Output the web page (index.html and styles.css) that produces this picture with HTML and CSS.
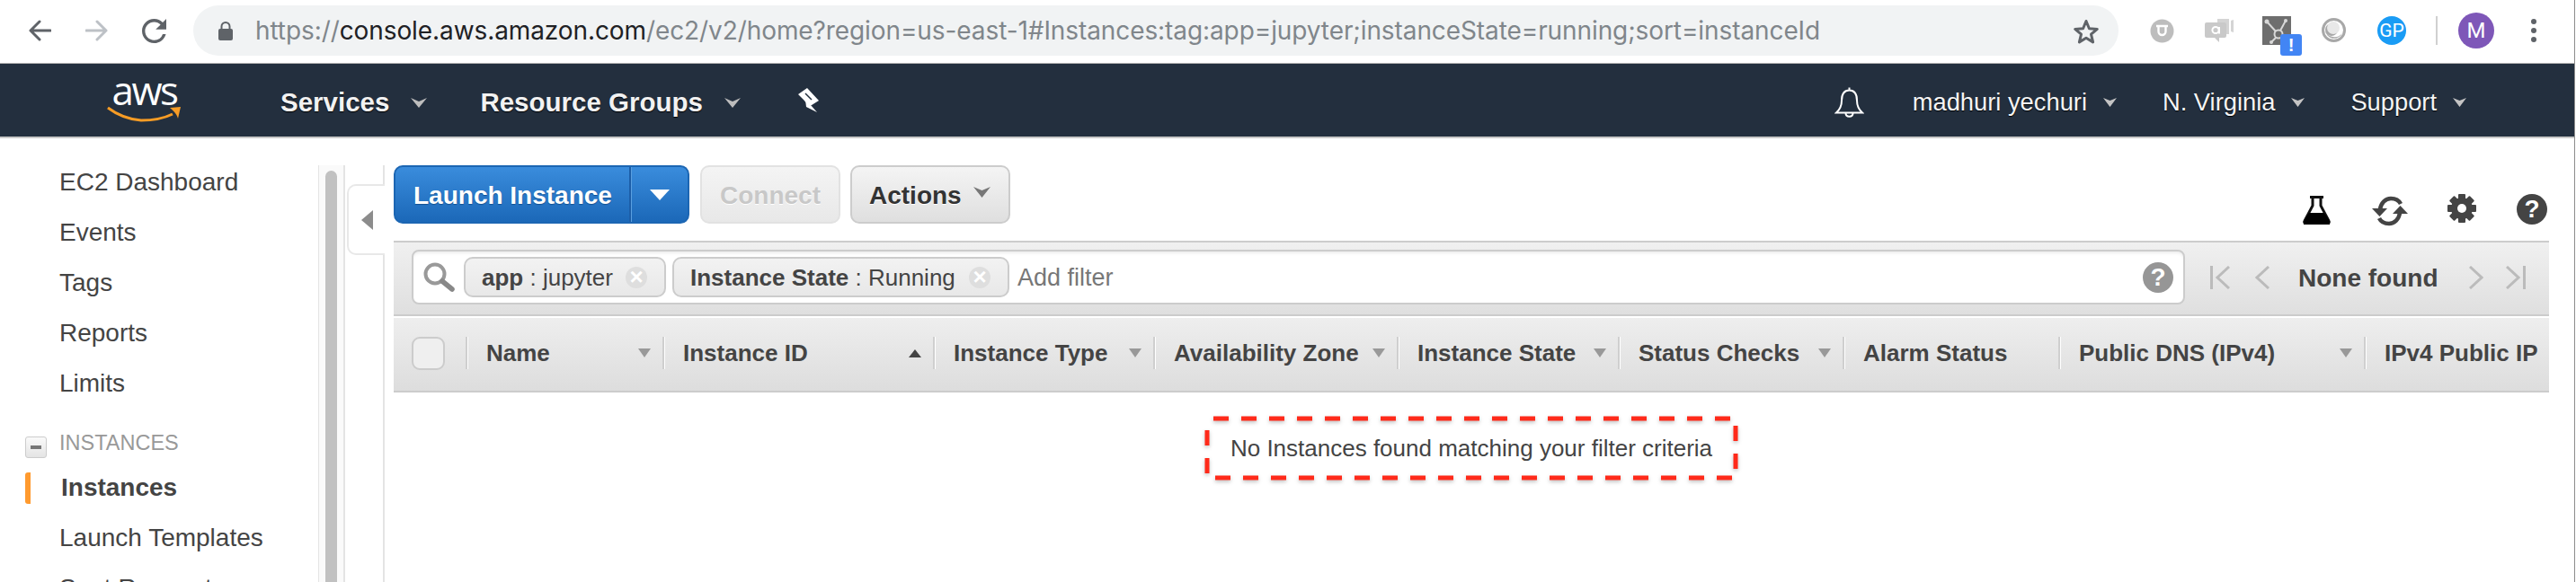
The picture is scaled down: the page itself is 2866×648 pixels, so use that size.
FILE: index.html
```html
<!DOCTYPE html>
<html lang="en">
<head>
<meta charset="utf-8">
<title>EC2 Instances</title>
<link rel="stylesheet" href="styles.css">
</head>
<body>
<div class="app">
  <header class="chrome">
    <svg class="ic-back" viewBox="0 0 26 24"><path d="M25 12H3M13 2 3 12l10 10"/></svg>
    <svg class="ic-fwd" viewBox="0 0 26 24"><path d="M1 12h22M13 2l10 10-10 10"/></svg>
    <svg class="ic-reload" viewBox="4 4 16 16"><path d="M17.65 6.35A7.958 7.958 0 0 0 12 4c-4.42 0-7.99 3.58-7.99 8s3.57 8 7.99 8c3.73 0 6.84-2.55 7.73-6h-2.08A5.99 5.99 0 0 1 12 18c-3.31 0-6-2.69-6-6s2.69-6 6-6c1.66 0 3.14.69 4.22 1.78L13 11h7V4l-2.35 2.35z"/></svg>
    <div class="omnibox">
      <svg class="ic-lock" viewBox="0 0 16 21"><path d="M3.5 8V5.5a4.5 4.5 0 0 1 9 0V8" fill="none" stroke="#5f6368" stroke-width="2"/><rect y="8" width="16" height="13" rx="2" fill="#5f6368"/></svg>
      <div class="url"><span class="dim">https://</span>console.aws.amazon.com<span class="dim">/ec2/v2/home?region=us-east-1#Instances:tag:app=jupyter;instanceState=running;sort=instanceId</span></div>
      <svg class="ic-star" viewBox="0 0 30 29"><path d="M15 3.5l3.4 8.2 8.9.7-6.8 5.8 2.1 8.7-7.6-4.7-7.6 4.7 2.1-8.7-6.8-5.8 8.9-.7z"/></svg>
    </div>
    <div class="ext ext-u"><svg viewBox="0 0 27 27"><circle cx="13.5" cy="13.5" r="13" fill="#bdbdbd"/><path d="M7 8h13M9.500 8v6a4 4 0 0 0 8 0V8" fill="none" stroke="#fff" stroke-width="2.4"/></svg></div>
    <div class="ext ext-a"><svg viewBox="0 0 32 28"><path d="M14 1h13v17H14z" fill="#d4d4d4"/><path d="M29 3l3-1v14l-3-1z" fill="#d4d4d4"/><path d="M2 5h20a2 2 0 0 1 2 2v13a2 2 0 0 1-2 2h-6v5l-5-5H2a2 2 0 0 1-2-2V7a2 2 0 0 1 2-2z" fill="#c9c9c9"/><circle cx="12" cy="13.5" r="3.6" fill="none" stroke="#fff" stroke-width="2"/><path d="M16 10v7.5" stroke="#fff" stroke-width="2"/></svg></div>
    <div class="ext ext-hub">
      <svg viewBox="0 0 32 32"><rect width="32" height="32" fill="#6e6e6e"/><g stroke="#d8d8d8" stroke-width="2" fill="none"><circle cx="18" cy="20" r="4.5"/><path d="M5 6l10 11M26 5l-6 11M15 24l-5 5"/></g><g fill="#d8d8d8"><circle cx="5" cy="6" r="2.5"/><circle cx="26" cy="5" r="2"/><circle cx="10" cy="29" r="2"/></g></svg>
      <span class="hub-badge">!</span>
    </div>
    <div class="ext ext-o"><svg viewBox="0 0 27 28"><circle cx="13.5" cy="13.5" r="12" fill="#fff" stroke="#a8a8a8" stroke-width="3"/><path d="M4 14a10 10 0 0 0 19 3 11 11 0 0 1-19-3z" fill="#a8a8a8"/><circle cx="11" cy="13" r="7" fill="#a8a8a8"/><circle cx="13" cy="11" r="7" fill="#e8e8e8"/></svg></div>
    <div class="ext-gp">GP</div>
    <div class="ext-sep"></div>
    <div class="avatar">M</div>
    <div class="dots"><i></i><i></i><i></i></div>
  </header>

  <nav class="nav">
    <div class="logo">
      <span class="logo-text">aws</span>
      <svg class="logo-smile" viewBox="0 0 83 19"><path d="M1 2c12 9 24 13 37 14 13 0 25-2 35-7" fill="none" stroke="#f79c25" stroke-width="3"/><path d="M70 2l12-1-3 13c-1-4-3-7-9-12z" fill="#f79c25"/></svg>
    </div>
    <div class="nav-main">Services<svg class="nav-caret" viewBox="0 0 18 12"><path d="M0 1l9 4 9-4-9 11z"/></svg></div>
    <div class="nav-main">Resource Groups<svg class="nav-caret" viewBox="0 0 18 12"><path d="M0 1l9 4 9-4-9 11z"/></svg></div>
    <svg class="ic-pin" viewBox="0 0 25 28"><path d="M1 7 11 0l13 14-8 5-3 1-6-7-4-4z"/><path d="M9 13l6 6 7 8-12-6z"/><path class="pin-notch" d="M9 6l7 7"/></svg>
    <svg class="ic-bell" viewBox="0 0 33 35"><path d="M16.500 1.500v3M16.500 4.500C10 4.500 8 10 8 16c0 6-2 10-6 13.500h29c-4-3.500-6-7.500-6-13.500 0-6-2-11.500-8.500-11.500z"/><path d="M12.500 30c0 5 8 5 8 0"/></svg>
    <div class="nav-side nav-user">madhuri yechuri<svg class="side-caret" viewBox="0 0 15 11"><path d="M0 1l7.500 3 7.500-3-7.500 10z"/></svg></div>
    <div class="nav-side nav-region">N. Virginia<svg class="side-caret" viewBox="0 0 15 11"><path d="M0 1l7.500 3 7.500-3-7.500 10z"/></svg></div>
    <div class="nav-side nav-support">Support<svg class="side-caret" viewBox="0 0 15 11"><path d="M0 1l7.500 3 7.500-3-7.500 10z"/></svg></div>
  </nav>

  <div class="main">
    <aside class="sidebar">
      <div class="side-item">EC2 Dashboard</div>
      <div class="side-item">Events</div>
      <div class="side-item">Tags</div>
      <div class="side-item">Reports</div>
      <div class="side-item">Limits</div>
      <div class="side-section"><span class="collapse"><i></i></span><span>INSTANCES</span></div>
      <div class="side-item side-active">Instances</div>
      <div class="side-item">Launch Templates</div>
      <div class="side-item">Spot Requests</div>
    </aside>
    <div class="scroll-track"><div class="scroll-thumb"></div></div>
    <div class="splitter"><div class="split-tab"><span class="tab-arrow"></span></div></div>

    <section class="content">
      <div class="toolbar">
        <div class="btn-launch"><span class="launch-label">Launch Instance</span><span class="launch-drop"><span class="tri-white"></span></span></div>
        <div class="btn btn-connect">Connect</div>
        <div class="btn btn-actions">Actions<svg class="actions-caret" viewBox="0 0 19 13"><path d="M0 1l9.500 4 9.500-4-9.500 12z"/></svg></div>
        <div class="tools">
          <svg class="ic-flask" viewBox="0 0 31 32"><path d="M8 1.500h15M11 2v9L2 28a2 2 0 0 0 2 3h23a2 2 0 0 0 2-3L20 11V2" fill="none" stroke="#111" stroke-width="3"/><path d="M7 19h17l6 9v4H1v-4z" fill="#000"/></svg>
          <svg class="ic-sync" viewBox="0 0 42 34"><path d="M10 15C11 8 16 3 22 3c5 0 9 2 11 6M32 19c-1 7-6 12-12 12-5 0-9-2-11-6" fill="none" stroke="#444" stroke-width="4.500"/><path d="M1 14h17l-8.500 9zM41 20H24l8.500-9z" fill="#444"/></svg>
          <svg class="ic-gear" viewBox="0 0 32 32"><g fill="#444"><rect x="12" y="0" width="8" height="32" rx="1"/><rect x="12" y="0" width="8" height="32" rx="1" transform="rotate(45 16 16)"/><rect x="12" y="0" width="8" height="32" rx="1" transform="rotate(90 16 16)"/><rect x="12" y="0" width="8" height="32" rx="1" transform="rotate(135 16 16)"/><circle cx="16" cy="16" r="12"/></g><circle cx="16" cy="16" r="5" fill="#fff"/></svg>
          <span class="help help-dark">?</span>
        </div>
      </div>

      <div class="filter-panel">
        <div class="search">
          <svg class="ic-search" viewBox="0 0 37 33"><circle cx="14" cy="13" r="10.500" fill="none" stroke="#999" stroke-width="4"/><path d="M22 21l11 9" stroke="#888" stroke-width="5.500" stroke-linecap="round"/></svg>
          <div class="chip"><span><b>app</b> : jupyter</span><span class="chip-x"></span></div>
          <div class="chip"><span><b>Instance State</b> : Running</span><span class="chip-x"></span></div>
          <span class="add-filter">Add filter</span>
          <span class="help help-gray">?</span>
        </div>
        <div class="pager">
          <svg class="pg-first" viewBox="0 0 22 26"><path d="M1.500 0v26M21 1 8 13l13 12"/></svg>
          <svg class="pg-prev" viewBox="0 0 16 26"><path d="M15 1 2 13l13 12"/></svg>
          <span class="pg-label">None found</span>
          <svg class="pg-next" viewBox="0 0 16 26"><path d="M1 1l13 12L1 25"/></svg>
          <svg class="pg-last" viewBox="0 0 22 26"><path d="M20.500 0v26M1 1l13 12L1 25"/></svg>
        </div>
      </div>

      <div class="table-head">
        <div class="cell-check"><span class="checkbox"></span></div>
        <div class="th"><span>Name</span><i class="tri"></i></div>
        <div class="th"><span>Instance ID</span><i class="tri tri-up"></i></div>
        <div class="th"><span>Instance Type</span><i class="tri"></i></div>
        <div class="th"><span>Availability Zone</span><i class="tri"></i></div>
        <div class="th"><span>Instance State</span><i class="tri"></i></div>
        <div class="th"><span>Status Checks</span><i class="tri"></i></div>
        <div class="th"><span>Alarm Status</span></div>
        <div class="th"><span>Public DNS (IPv4)</span><i class="tri"></i></div>
        <div class="th"><span>IPv4 Public IP</span></div>
      </div>

      <div class="empty">
        <span>No Instances found matching your filter criteria</span>
        <svg class="dash-box" viewBox="0 0 594 72"><rect x="3" y="3" width="588" height="66"/></svg>
      </div>
    </section>
  </div>
</div>
</body>
</html>
```

FILE: styles.css
```css
* { box-sizing: border-box; }
html, body { margin: 0; padding: 0; height: 648px; overflow: hidden; background: #fff; }
body { font-family: "Liberation Sans", Arial, sans-serif; color: #444; }
svg { display: block; flex: none; }
i { display: block; }

.app { width: 2865px; height: 648px; border-right: 1px solid #8c8c8c; overflow: hidden; }

/* Browser chrome */
.chrome { display: flex; align-items: center; height: 71px; padding-left: 31px; padding-bottom: 2px; border-bottom: 1px solid #b4b4b4; background: #fff; }
.ic-back, .ic-fwd { width: 26px; height: 24px; fill: none; stroke-width: 3; stroke-linecap: round; stroke-linejoin: round; }
.ic-back { stroke: #5f6368; }
.ic-fwd { stroke: #bdc1c6; margin-left: 38px; }
.ic-reload { width: 27px; height: 27px; margin-left: 37px; fill: #5f6368; }
.omnibox { display: flex; align-items: center; width: 2142px; height: 56px; margin-left: 30px; padding-left: 28px; border-radius: 28px; background: #f1f3f4; }
.ic-lock { width: 16px; height: 21px; }
.url { margin-left: 25px; width: 1742px; font-family: Inter, "Liberation Sans", sans-serif; font-size: 28px; letter-spacing: -0.09px; color: #202124; white-space: nowrap; }
.dim { color: #80868b; }
.ic-star { width: 30px; height: 29px; margin-left: 280px; fill: none; stroke: #5f6368; stroke-width: 3; stroke-linejoin: round; }
.ext { flex: none; position: relative; }
.ext svg { width: 100%; height: 100%; }
.ext-u { width: 27px; height: 27px; margin-left: 35px; }
.ext-a { width: 32px; height: 28px; margin-left: 34px; }
.ext-hub { width: 32px; height: 32px; margin-left: 32px; }
.hub-badge { position: absolute; left: 20px; top: 20px; width: 24px; height: 24px; border-radius: 3px; background: #4285f4; color: #fff; font-size: 20px; font-weight: bold; line-height: 24px; text-align: center; }
.ext-o { width: 27px; height: 28px; margin-left: 34px; }
.ext-gp { flex: none; width: 32px; height: 32px; margin-left: 35px; border-radius: 50%; background: #1a9cf5; color: #fff; font-family: Roboto, sans-serif; font-size: 21px; line-height: 32px; text-align: center; }
.ext-sep { flex: none; width: 2px; height: 32px; margin-left: 33px; background: #d0d0d0; }
.avatar { flex: none; width: 40px; height: 40px; margin-left: 23px; border-radius: 50%; background: #7e57b8; color: #fff; font-family: Roboto, sans-serif; font-size: 24px; line-height: 40px; text-align: center; }
.dots { display: flex; flex-direction: column; gap: 4px; margin-left: 41px; }
.dots i { width: 6px; height: 6px; border-radius: 50%; background: #5f6368; }

/* AWS nav */
.nav { display: flex; align-items: center; height: 83px; padding: 4px 120px 0 119px; background: #232f3e; border-bottom: 2px solid #c9c9c9; color: #fff; }
.logo { flex: none; width: 83px; height: 54px; margin-bottom: 7px; display: flex; flex-direction: column; align-items: center; }
.logo-text { height: 34px; font-family: "Open Sans", sans-serif; font-size: 44px; line-height: 34px; letter-spacing: -2.5px; color: #fff; }
.logo-smile { width: 83px; height: 19px; margin-top: 1px; }
.nav-main { display: flex; align-items: center; font-size: 29.5px; font-weight: bold; color: #f2f2f2; text-shadow: 0 1px 1px #000; white-space: nowrap; }
.nav-main:nth-of-type(2) { margin-left: 110px; }
.nav-main:nth-of-type(3) { margin-left: 59px; }
.nav-caret { width: 18px; height: 12px; margin-left: 24px; fill: #bdbdbd; }
.ic-pin { width: 25px; height: 28px; margin-left: 63px; margin-bottom: 3px; fill: #fff; }
.pin-notch { fill: none; stroke: #232f3e; stroke-width: 1.5; }
.ic-bell { width: 33px; height: 35px; margin-left: auto; fill: none; stroke: #fff; stroke-width: 2; }
.nav-side { display: flex; align-items: center; font-size: 27.3px; color: #f5f5f5; text-shadow: 0 1px 1px #000; white-space: nowrap; }
.nav-user { margin-left: 54px; }
.nav-region, .nav-support { margin-left: 51px; }
.side-caret { width: 15px; height: 11px; margin-left: 18px; fill: #c4c4c4; }

/* Main layout */
.main { display: flex; height: 494px; overflow: hidden; }
.sidebar { flex: none; width: 354px; padding-top: 21px; }
.side-item { display: flex; align-items: center; height: 56px; padding-left: 66px; font-size: 28px; color: #444; white-space: nowrap; }
.side-active { padding-left: 28px; font-weight: bold; }
.side-active::before { content: ""; width: 6px; height: 35px; margin-right: 34px; border-radius: 3px 0 0 3px; background: #ff9a2e; }
.side-section { display: flex; align-items: flex-start; height: 60px; padding: 26px 0 0 28px; font-size: 23.5px; line-height: 24px; color: #999; }
.collapse { display: flex; align-items: center; justify-content: center; width: 24px; height: 24px; margin: 5px 14px 0 0; border: 1px solid #ccc; border-radius: 3px; background: linear-gradient(#fafafa, #e4e4e4); }
.collapse i { width: 12px; height: 4px; background: #777; }
.scroll-track { flex: none; width: 30px; margin-top: 30px; padding: 6px 7px 0; background: #fafafa; border-left: 1px solid #e4e4e4; border-right: 2px solid #e4e4e4; }
.scroll-thumb { height: 600px; border-radius: 8px; background: #c1c1c1; }
.splitter { flex: none; width: 44px; margin: 30px 0 0 0; border-right: 2px solid #e4e4e4; padding: 21px 0 0 2px; }
.split-tab { display: flex; align-items: center; justify-content: flex-start; width: 42px; height: 79px; margin-right: -2px; padding-left: 14px; background: #fff; border: 2px solid #e8e8e8; border-right: 0; border-radius: 10px 0 0 10px; }
.tab-arrow { width: 0; height: 0; border-top: 11px solid transparent; border-bottom: 11px solid transparent; border-right: 13px solid #8c8c8c; }

.content { flex: none; width: 2398px; margin-left: 10px; padding-top: 30px; }

/* Toolbar */
.toolbar { display: flex; align-items: flex-start; height: 65px; margin-bottom: 19px; }
.btn-launch { display: flex; width: 329px; height: 65px; border: 2px solid #1c66b3; border-radius: 10px; background: linear-gradient(#3a8cdc, #1b68b8); color: #fff; font-size: 28px; font-weight: bold; text-shadow: 0 1px 1px #14508f; }
.launch-label { display: flex; align-items: center; width: 262px; padding: 2px 0 0 20px; border-right: 2px solid #1c5ea8; white-space: nowrap; }
.launch-drop { display: flex; flex: 1; align-items: center; justify-content: center; border-left: 1px solid #5a9fe0; }
.tri-white { width: 0; height: 0; border-left: 11px solid transparent; border-right: 11px solid transparent; border-top: 12px solid #fff; }
.btn { display: flex; align-items: center; height: 65px; padding: 2px 0 0 20px; border: 2px solid #ccc; border-radius: 10px; background: linear-gradient(#f4f4f4, #dfdfdf); font-size: 28px; font-weight: bold; white-space: nowrap; }
.btn-connect { width: 156px; margin-left: 12px; border-color: #e2e2e2; background: linear-gradient(#f4f4f4, #e8e8e8); color: #c8c8c8; text-shadow: 0 1px 0 #fff; }
.btn-actions { width: 178px; margin-left: 11px; padding-left: 19px; color: #333; text-shadow: 0 1px 0 #fff; }
.actions-caret { width: 19px; height: 13px; margin: -8px 0 0 13px; fill: #777; }
.tools { display: flex; align-items: flex-start; margin-left: auto; padding: 32px 2px 0 0; }
.ic-flask { width: 31px; height: 32px; margin-top: 2px; }
.ic-sync { width: 42px; height: 34px; margin: 2px 0 0 45px; }
.ic-gear { width: 32px; height: 32px; margin-left: 43px; }
.help { display: block; flex: none; width: 34px; height: 34px; border-radius: 50%; color: #fff; font-size: 28px; font-weight: bold; line-height: 34px; text-align: center; }
.help-dark { margin-left: 45px; background: #444; }
.help-gray { margin: 0 11px 0 auto; background: #969696; }

/* Filter panel */
.filter-panel { display: flex; align-items: flex-start; height: 84px; padding: 8px 0 0 20px; border-top: 2px solid #ccc; border-bottom: 2px solid #ccc; background: linear-gradient(#f0f0f0, #dfdfdf); }
.search { display: flex; align-items: center; width: 1973px; height: 61px; padding-left: 10px; background: #fff; border: 2px solid #ccc; border-radius: 8px; box-shadow: inset 0 3px 4px -2px #e4e4e4; }
.ic-search { width: 37px; height: 33px; margin-right: 9px; }
.chip { display: flex; align-items: center; justify-content: space-between; height: 45px; padding: 2px 19px 0 18px; margin-right: 7px; border: 2px solid #ccc; border-radius: 10px; background: linear-gradient(#f2f2f2, #e8e8e8); font-size: 26px; white-space: nowrap; }
.chip:nth-of-type(1) { width: 225px; }
.chip:nth-of-type(2) { width: 375px; }
.chip-x { position: relative; flex: none; width: 24px; height: 24px; margin-top: -2px; border-radius: 50%; background: #dedede; }
.chip-x::before { content: "×"; position: absolute; inset: 0; color: #fff; font-size: 26px; font-weight: bold; line-height: 23px; text-align: center; }
.add-filter { margin-left: 2px; padding-top: 2px; font-size: 27px; color: #777; white-space: nowrap; }
.pager { display: flex; align-items: center; height: 61px; margin-left: 28px; fill: none; stroke: #bbb; stroke-width: 3; }
.pg-first, .pg-last { width: 22px; height: 26px; }
.pg-prev, .pg-next { width: 16px; height: 26px; }
.pg-prev { margin-left: 28px; }
.pg-label { margin: 0 34px 0 32px; padding-top: 2px; font-size: 28px; font-weight: bold; color: #444; white-space: nowrap; }
.pg-last { margin-left: 25px; }

/* Table header */
.table-head { display: grid; grid-template-columns: 80px 219px 301px 245px 271px 246px 250px 240px 340px 206px; align-items: center; height: 83px; margin-top: 2px; padding-bottom: 3px; border-bottom: 2px solid #ccc; background: linear-gradient(#eeeeee, #dddddd); }
.cell-check { padding-left: 20px; }
.checkbox { display: block; width: 37px; height: 37px; border: 2px solid #ccc; border-radius: 9px; background: #efefef; }
.th { display: flex; align-items: center; justify-content: space-between; height: 36px; padding: 0 13px 0 21px; border-left: 2px solid #cfcfcf; box-shadow: inset 1px 0 0 #fff; font-size: 26px; font-weight: bold; color: #444; white-space: nowrap; }
.tri { flex: none; width: 0; height: 0; border-left: 7.5px solid transparent; border-right: 7.5px solid transparent; border-top: 10px solid #999; }
.tri-up { border-top: 0; border-bottom: 9px solid #444; }

/* Empty message */
.empty { position: relative; display: flex; align-items: center; justify-content: center; width: 594px; height: 72px; margin: 26px auto 0; font-size: 26px; color: #444; white-space: nowrap; }
.dash-box { position: absolute; left: 0; top: 0; width: 594px; height: 72px; overflow: visible; fill: none; stroke: #ff2a1a; stroke-width: 5; stroke-dasharray: 17 14; stroke-dashoffset: -7; filter: drop-shadow(0 2px 2px rgba(0,0,0,.25)); }
```
